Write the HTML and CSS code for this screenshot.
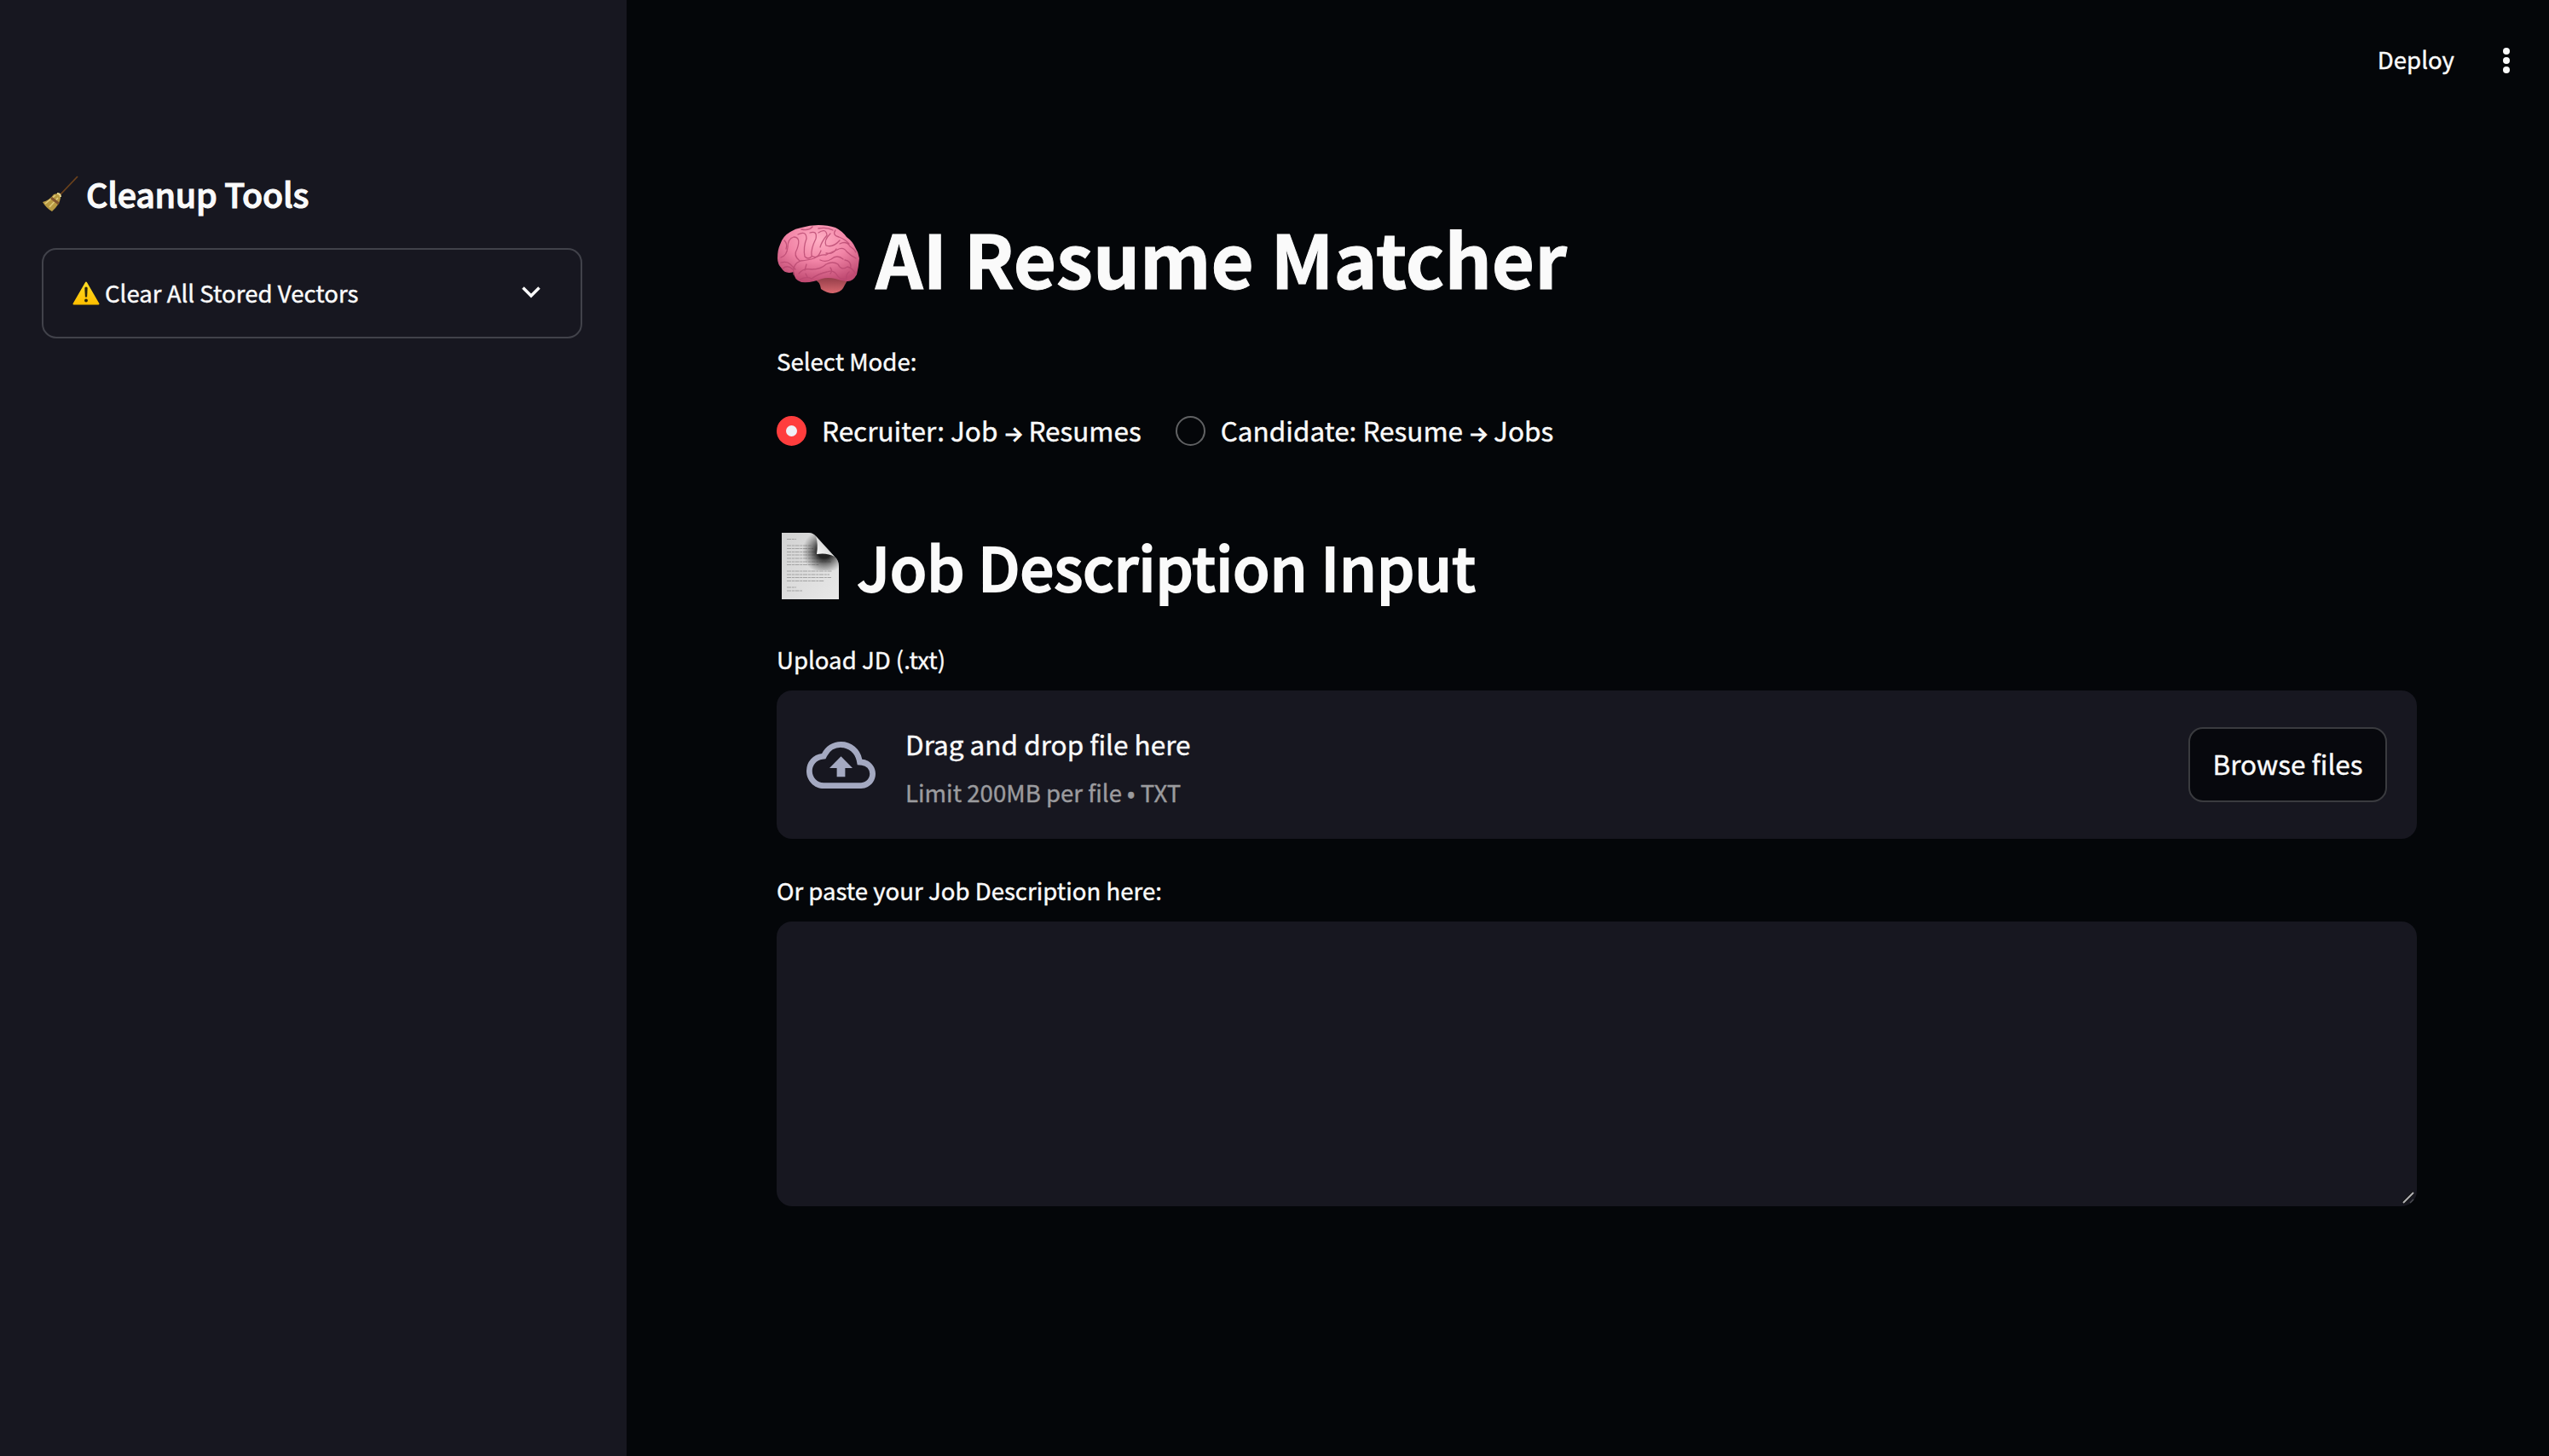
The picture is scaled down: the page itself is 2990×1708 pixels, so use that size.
FILE: index.html
```html
<!DOCTYPE html>
<html lang="en">
<head>
<meta charset="utf-8">
<title>AI Resume Matcher</title>
<link rel="stylesheet" href="styles.css">
</head>
<body>
<aside class="sidebar">
  <h3 class="side-title">
    <svg class="broom" viewBox="0 0 42 42"><path d="M41 1 21 22" stroke="#6b421c" stroke-width="1.8"/><path d="M17 21q4 0 4 5-1 8-10 16Q4 38 0 31q8-2 13-9z" fill="#b89a42"/><path d="M15 23 3 33M18 26 8 37" stroke="#e0cb7c" stroke-width="1.6"/><path d="m10 26 9 7" stroke="#81542d" stroke-width="3"/><path d="M17 21q4 0 4 4" stroke="#e8d68e" stroke-width="2" fill="none"/></svg>
    <span>Cleanup Tools</span>
  </h3>
  <div class="expander">
    <svg class="warn" viewBox="0 0 32 28"><defs><linearGradient id="amber" x2="0" y2="1"><stop stop-color="#ffdc24"/><stop offset="1" stop-color="#ffbf00"/></linearGradient></defs><path d="M16 1.5 30.5 26.5h-29z" fill="url(#amber)" stroke="url(#amber)" stroke-width="2" stroke-linejoin="round"/><path d="M14.3 8q0-1.6 1.7-1.6T17.700 8l-.6 10.500h-2.200z" fill="#29230b"/><circle cx="16" cy="22.500" r="1.900" fill="#29230b"/></svg>
    <span class="expander-label">Clear All Stored Vectors</span>
    <svg class="chevron" viewBox="0 0 22 14"><path d="m1.500 1.500 9.500 9.500 9.500-9.500" fill="none" stroke="#fafafa" stroke-width="3.500"/></svg>
  </div>
</aside>
<main class="main">
  <header class="toolbar">
    <span class="deploy">Deploy</span>
    <svg class="dots" viewBox="0 0 8 30"><circle cx="4" cy="4" r="4"/><circle cx="4" cy="15" r="4"/><circle cx="4" cy="26" r="4"/></svg>
  </header>
  <div class="content">
    <h1 class="title">
      <svg class="brain" viewBox="0 0 96 80">
        <defs>
          <radialGradient id="pink" cx=".5" cy=".25" r=".75"><stop stop-color="#ffafc4"/><stop offset=".5" stop-color="#f285a7"/><stop offset="1" stop-color="#c04a72"/></radialGradient>
          <linearGradient id="stem" x2="0" y2="1"><stop stop-color="#7d2f3c"/><stop offset="1" stop-color="#d9686f"/></linearGradient>
        </defs>
        <path d="M42 63q8 3 9 12 7 5 14 5 9-1 12-6 2-4 5-9L70 56z" fill="url(#stem)"/>
        <path d="M0 39Q0 29 3 23 6 13 15 8q6-4 13-5 10-3 20-3 11 0 20 3 8 4 13 11 7 5 10 12 4 6 5 13-1 11-3 19-5 9-12 8-8-1-13-3-9-2-16 0-11 5-24 4-9-3-9-12Q9 58 5 51 0 46 0 39z" fill="url(#pink)"/>
        <g class="folds">
          <path d="M19 58Q17 46 27 42q10-1 16-3 8-5 14-4 8-4 13-6 7-4 11 2 5 5 11 8"/>
          <path d="M4 38q7-2 8-12 0-10 7-12 9 0 4 14-5 8 3 14M24 11q10-5 10 5-4 10-2 21 4 4 8 0M38 9q9-3 7 7-6 12-5 20 7 5 11-6M48 9q9-6 10 3-6 7-8 14M62 10q-8 8-5 14 8 3 16-6M57 33q8 2 12-5M68 6q-4 6 4 8 8 3 12 8M73 22q8-4 12 3 5 3 7 7M8 18q4 4 2 10M28 5q9 2 13-3M48 4q10-2 17 2"/>
          <path d="M4 44q7-2 11 2l6 6M6 51q6-5 12 1M25 57q5-7 15-5 11 0 17-6 8-4 14 0 4 8 11 3 6 1 10 9M26 64q8-4 14-1 8-6 18-8 8-3 12 4 4 6 11 4M50 41q7 3 13-1 7-6 14 0M79 41q7 1 7 8M62 50q3 4 0 7M84 55q-4 3-3 8M34 46l-2 7M33 57l2 4"/>
        </g>
      </svg>
      <span>AI Resume Matcher</span>
    </h1>
    <div class="label mode-label">Select Mode:</div>
    <div class="radios">
      <div class="radio"><i class="circle checked"></i><span>Recruiter: Job</span><span class="arrow">→</span><span>Resumes</span></div>
      <div class="radio"><i class="circle"></i><span>Candidate: Resume</span><span class="arrow">→</span><span>Jobs</span></div>
    </div>
    <h2 class="subtitle">
      <svg class="page" viewBox="0 0 67 78">
        <defs>
          <linearGradient id="paper" x2="1" y2="1"><stop stop-color="#d2d2d2"/><stop offset="1" stop-color="#e8e8e8"/></linearGradient>
          <radialGradient id="shade" gradientUnits="userSpaceOnUse" cx="50" cy="22" r="26"><stop offset=".3" stop-color="#222"/><stop offset="1" stop-color="#555" stop-opacity="0"/></radialGradient>
          <linearGradient id="curl" x1="0" y1="1" x2="1" y2="0"><stop stop-color="#fff"/><stop offset="1" stop-color="#bbb"/></linearGradient>
        </defs>
        <path d="M0 0h32q5 0 9 5l20 22q6 5 6 12v39H0z" fill="url(#paper)"/>
        <path d="M6 7.500h11M6 15h29M6 18.500h31M6 22.500h33M6 26h33M6 30h50M6 34h52M6 37.500h38M6 45h53M6 49h50M6 52.500h52M6 56.500h44M6 64h11M6 68h18" stroke="#a2a2a2" stroke-width="1.200" stroke-dasharray="5 .8 3 .7"/>
        <path d="M32 0q5 0 9 5l20 22q6 5 6 12v5H24V0z" fill="url(#shade)"/>
        <path d="M40 4q3 9 1 21 12-2 21 3z" fill="url(#curl)"/>
      </svg>
      <span>Job Description Input</span>
    </h2>
    <div class="label">Upload JD (.txt)</div>
    <section class="dropzone">
      <svg class="cloud" viewBox="0 4 24 16" preserveAspectRatio="none"><path d="M19.350 10.040A7.490 7.490 0 0 0 12 4C9.110 4 6.600 5.640 5.350 8.040A5.994 5.994 0 0 0 0 14c0 3.310 2.690 6 6 6h13c2.760 0 5-2.240 5-5 0-2.640-2.050-4.780-4.650-4.960zM19 18H6c-2.210 0-4-1.790-4-4 0-2.050 1.530-3.760 3.560-3.970l1.070-.11.500-.95A5.469 5.469 0 0 1 12 6c2.620 0 4.880 1.860 5.390 4.430l.3 1.500 1.530.11A2.980 2.980 0 0 1 22 15c0 1.650-1.350 3-3 3zM8 13h2.550v3h2.900v-3H16l-4-4z"/></svg>
      <div class="instructions"><div class="drag">Drag and drop file here</div><div class="limit">Limit 200MB per file • TXT</div></div>
      <button class="browse">Browse files</button>
    </section>
    <div class="label">Or paste your Job Description here:</div>
    <div class="textarea"><svg class="grip" viewBox="0 0 14 14"><path d="M1 13 13 1" stroke="#111" stroke-width="4"/><path d="M1 13 13 1" stroke="#b4b4b6" stroke-width="2"/><path d="m9 13 4-4" stroke="#4c4c52" stroke-width="1.500"/></svg></div>
  </div>
</main>
</body>
</html>
```
FILE: styles.css
```css
* { box-sizing: border-box; }
body {
  margin: 0;
  display: flex;
  height: 1708px;
  overflow: hidden;
  background: #040609;
  color: #fafafa;
  font-family: "Noto Sans CJK JP", sans-serif;
  font-size: 31.5px;
  white-space: nowrap;
  -webkit-text-stroke: .4px currentColor;
}
svg { display: block; flex: none; overflow: visible; }
h1, h2, h3 { margin: 0; display: flex; }
.sidebar { flex: none; width: 735px; padding: 197px 52px 0 49px; background: #171720; }
.side-title {
  height: 60px;
  line-height: 60px;
  gap: 9px;
  font-size: 39.4px;
  font-weight: 500;
  letter-spacing: -.25px;
  -webkit-text-stroke: 1.1px #fafafa;
}
.broom { width: 42px; height: 42px; margin: 9px 0 0 1px; fill: none; }
.expander {
  display: flex;
  align-items: center;
  height: 106px;
  margin-top: 34px;
  padding: 0 47px 0 34px;
  border: 2px solid #41424a;
  border-radius: 17px;
}
.warn { width: 32px; height: 28px; margin-right: 6px; }
.expander-label { flex: 1; margin-top: -2px; font-size: 27.6px; line-height: 48px; }
.chevron { width: 22px; height: 14px; margin-top: -3px; }
.main { flex: 1; }
.toolbar {
  display: flex;
  justify-content: flex-end;
  height: 241px;
  padding: 45px 46px 0 0;
  font-size: 27.6px;
  line-height: 48px;
}
.deploy { margin-right: 57px; }
.dots { width: 8px; height: 30px; margin-top: 11px; fill: #fafafa; }
.content { padding: 0 155px 0 176px; }
.title {
  height: 120px;
  line-height: 120px;
  gap: 19px;
  font-size: 86.7px;
  font-weight: 700;
  letter-spacing: -.05px;
  -webkit-text-stroke: 1px #fafafa;
}
.brain { width: 96px; height: 80px; margin: 23px 0 0 1px; }
.folds { fill: none; stroke: #b84870; stroke-width: 1.3; stroke-linecap: round; opacity: .8; }
.label { height: 48px; margin-top: 36px; font-size: 27.6px; line-height: 48px; }
.mode-label { margin-top: 38px; }
.radios { display: flex; gap: 40px; margin-top: 31px; height: 52px; line-height: 52px; }
.radio { display: flex; align-items: baseline; }
.circle {
  align-self: center;
  width: 35px;
  height: 35px;
  margin: 3px 18px 0 0;
  border: 2px solid #606163;
  border-radius: 50%;
}
.circle.checked { border: 11px solid #ff3d3d; background: #f0f0f6; }
.arrow {
  display: flex;
  justify-content: center;
  width: 21px;
  margin: 0 7px 0 8px;
  font-family: Inter, sans-serif;
  font-size: 25px;
  -webkit-text-stroke: 1px #fafafa;
}
.subtitle {
  height: 100px;
  margin-top: 83px;
  line-height: 100px;
  gap: 21px;
  font-size: 70.9px;
  font-weight: 500;
  letter-spacing: -.25px;
  -webkit-text-stroke: 1.8px #fafafa;
}
.page { width: 67px; height: 78px; margin: 12px 0 0 6px; }
.dropzone {
  display: flex;
  height: 174px;
  margin-top: 13px;
  padding: 36px 35px 0;
  background: #171720;
  border-radius: 18px;
}
.cloud { width: 81px; height: 55px; margin: 24px 35px 0 0; fill: #a4a9c1; }
.instructions { flex: 1; }
.drag { line-height: 52px; }
.limit { margin-top: 7px; font-size: 27.6px; line-height: 48px; color: #9b9b9e; }
.browse {
  width: 233px;
  height: 88px;
  margin-top: 7px;
  padding: 0 0 4px;
  border: 2px solid #3a3b3f;
  border-radius: 17px;
  background: #07080d;
  color: inherit;
  font: inherit;
}
.textarea {
  display: flex;
  justify-content: flex-end;
  align-items: flex-end;
  height: 334px;
  margin-top: 13px;
  padding: 3px;
  background: #171720;
  border-radius: 18px;
}
.grip { width: 14px; height: 14px; }
```
